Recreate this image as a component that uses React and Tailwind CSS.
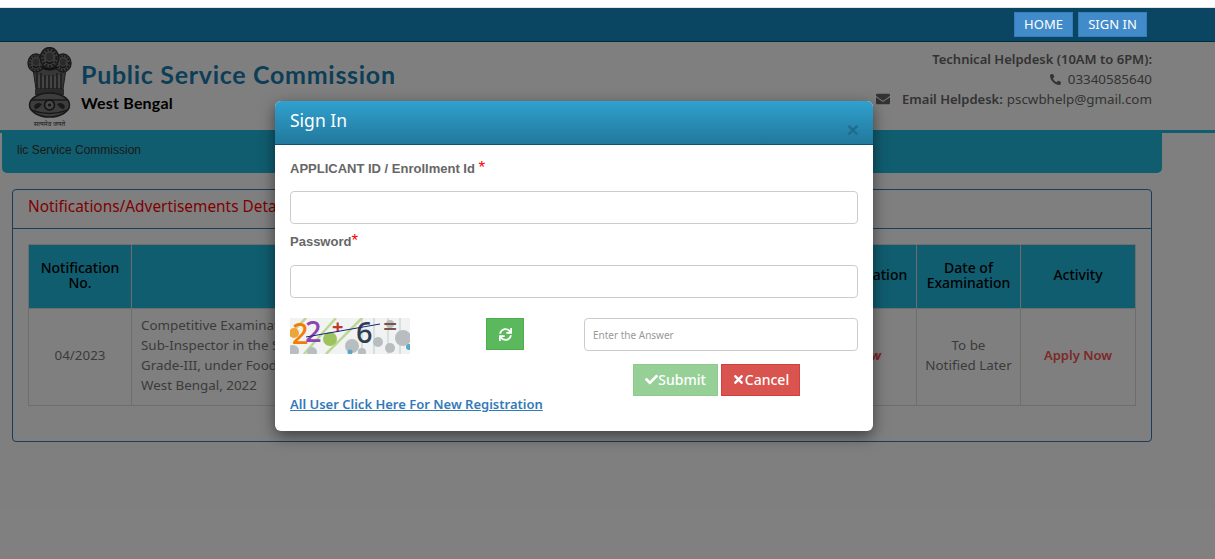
import { FaPhoneAlt, FaEnvelope, FaSync, FaCheck, FaTimes } from "react-icons/fa";

const body = "font-['Noto_Sans','Open_Sans',sans-serif]";

function Lion({ x, y, s = 1 }) {
  return (
    <g transform={`translate(${x} ${y}) scale(${s})`}>
      <ellipse cx="0" cy="0" rx="8" ry="9" fill="#777" stroke="#333" strokeWidth="1.4" />
      <ellipse cx="0" cy="0" rx="6" ry="7" fill="none" stroke="#2f2f2f" strokeWidth="2" strokeDasharray="1.5 1.5" />
      <ellipse cx="0" cy="-1" rx="3" ry="3.5" fill="#555" />
      <path d="M-3 3Q0 6 3 3" stroke="#222" strokeWidth="1.3" fill="none" />
    </g>
  );
}

function Emblem() {
  return (
    <svg width="50" height="82" viewBox="0 0 50 82" className="shrink-0">
      <path d="M8 22 L41 22 L38 42 L11 42 Z" fill="#6f6f6f" stroke="#3a3a3a" strokeWidth="1" />
      <Lion x={11} y={16} />
      <Lion x={38} y={16} />
      <Lion x={24.5} y={11} s={1.15} />
      <path d="M17 20Q24.5 25 32 20" stroke="#1f1f1f" strokeWidth="2" fill="none" />
      <g stroke="#333" strokeWidth="1.3">
        <path d="M12 26V42M16 26V42M20 28V42M24 28V42M28 28V42M32 26V42M36 26V42" />
      </g>
      <g stroke="#a5a5a5" strokeWidth="1">
        <path d="M14 28V41M18 29V41M22 29V41M26 29V41M30 29V41M34 28V41" />
      </g>
      <rect x="10" y="42" width="29" height="6" fill="#555" />
      <ellipse cx="24.5" cy="58" rx="20" ry="12" fill="#7a7a7a" stroke="#2f2f2f" strokeWidth="1.5" />
      <path d="M6 53H43" stroke="#333" strokeWidth="1.5" />
      <path d="M6 63Q24.5 70 43 63" stroke="#333" strokeWidth="1.5" fill="none" />
      <circle cx="24.5" cy="58" r="5" fill="#8a8a8a" stroke="#222" strokeWidth="1.5" />
      <circle cx="24.5" cy="58" r="1.5" fill="#222" />
      <path d="M9 59Q12 54 17 57Q14 62 10 62Z" fill="#333" />
      <path d="M40 59Q37 54 32 57Q35 62 39 62Z" fill="#333" />
      <text x="24.5" y="79" textAnchor="middle" fontSize="6.5" fill="#333" fontFamily="'Noto Sans', sans-serif">
        सत्यमेव जयते
      </text>
    </svg>
  );
}

function Captcha() {
  return (
    <svg width="120" height="36" viewBox="0 0 120 36" className="shrink-0">
      <rect width="120" height="36" fill="#f1f3f3" />
      <g stroke="#d9dede" strokeWidth="2">
        <path d="M72 0V36M84 0V36M98 0V36M110 0V36" />
      </g>
      <g stroke="#bcd893" strokeWidth="2.5">
        <path d="M14 36L46 0M36 36L72 0M2 14L16 0" />
      </g>
      <g fill="#b8bdbf">
        <circle cx="3" cy="33" r="6" />
        <circle cx="22" cy="34" r="5" />
        <circle cx="62" cy="28" r="7" />
        <circle cx="72" cy="34" r="4" />
        <circle cx="88" cy="24" r="5" />
        <circle cx="100" cy="30" r="5" />
        <circle cx="113" cy="20" r="8" />
        <circle cx="100" cy="6" r="4" />
      </g>
      <circle cx="40" cy="21" r="7" fill="#9cc35d" />
      <circle cx="4" cy="15" r="5" fill="#efa43a" />
      <circle cx="60" cy="34" r="2.5" fill="#5aa7c4" />
      <circle cx="119" cy="29" r="3" fill="#5aa7c4" />
      <g fontFamily="'Noto Sans', sans-serif">
        <text x="2" y="26" fontSize="29" fontWeight="500" fill="#f57c00">2</text>
        <text x="15" y="24" fontSize="29" fontWeight="500" fill="#8e44ad">2</text>
        <text x="42" y="16" fontSize="20" fontWeight="700" fill="#c0392b">+</text>
        <text x="66" y="25" fontSize="29" fontWeight="500" fill="#2c3e50">6</text>
        <text x="93" y="17" fontSize="25" fontWeight="500" fill="#795548">=</text>
      </g>
      <path d="M16 19L90 6" stroke="#1a237e" strokeWidth="1" />
    </svg>
  );
}

export default function App() {
  return (
    <div className={`h-screen overflow-hidden bg-white ${body} text-[13.4px]`}>
      <div className="h-2 border-b border-[#e3e3e3]"></div>

      {/* nav sits above the backdrop */}
      <div className="relative z-20 h-[34px] bg-[#0a4561] border-b border-[#03293d] flex items-start justify-end gap-[5px] pr-[68px] pt-1">
        <a className="h-[25px] w-[59px] flex items-center justify-center bg-[#428bca] border border-[#357ebd] text-white text-[13px]">HOME</a>
        <a className="h-[25px] w-[69px] flex items-center justify-center bg-[#428bca] border border-[#357ebd] text-white text-[13px]">SIGN IN</a>
      </div>

      <div className="relative h-[517px]">
        <header className="h-[91px] border-b-[3px] border-[#20bbe0] flex justify-between pl-[25px] pr-[63px] pt-[5px]">
          <div className="flex gap-[6px]">
            <Emblem />
            <div className="pt-[12px]">
              <h1 className="font-['Lato',sans-serif] font-bold text-[25px] leading-[30px] tracking-[0.7px] text-[#1b7cb0]">Public Service Commission</h1>
              <p className="font-['Lato',sans-serif] font-bold text-[16px] leading-[20px] tracking-[0.2px] mt-[4px] text-black">West Bengal</p>
            </div>
          </div>
          <div className="text-right leading-[20px] pt-[2px] text-[#666]">
            <p className="font-semibold text-[13px]">Technical Helpdesk (10AM to 6PM):</p>
            <p className="flex items-center justify-end">
              <FaPhoneAlt className="text-[11px] mr-[7px]" />03340585640
            </p>
            <p className="flex items-center justify-end">
              <FaEnvelope className="text-[14px] mr-[12px]" />
              <span className="font-semibold text-[13px] mr-1">Email Helpdesk:</span>pscwbhelp@gmail.com
            </p>
          </div>
        </header>

        <div className="ml-[2px] w-[1160px] h-10 bg-[#20bbe0] rounded-b-[5px] pl-[15px] pt-[9px] font-['Liberation_Sans',sans-serif] text-[12px] leading-[16px] text-[#333] overflow-hidden whitespace-nowrap">
          lic Service Commission
        </div>

        <section className="ml-3 mt-4 w-[1140px] h-[253px] border border-[#337ab7] rounded-[4px]">
          <div className="h-[39px] border-b border-[#337ab7] pl-[15px] pb-[5px] flex items-center text-[15.4px] text-[#ff0000]">
            Notifications/Advertisements Details
          </div>
          <div className="px-[15px] pt-[15px]">
            <table className="w-[1107px] table-fixed border-collapse border border-[#ddd] text-[#777]">
              <colgroup>
                <col className="w-[103px]" />
                <col className="w-[469px]" />
                <col className="w-[190px]" />
                <col className="w-[126px]" />
                <col className="w-[104px]" />
                <col className="w-[115px]" />
              </colgroup>
              <thead>
                <tr className="h-[64px] bg-[#20bbe0] text-black text-[14px] leading-[15px] text-center">
                  <th className="border border-[#ddd] font-medium pb-1">Notification<br />No.</th>
                  <th className="border border-[#ddd] font-medium pb-1">Name of Examination</th>
                  <th className="border border-[#ddd] font-medium pb-1">Advertisement</th>
                  <th className="border border-[#ddd] font-medium pb-1 pl-[32px]">Application</th>
                  <th className="border border-[#ddd] font-medium pb-1">Date of<br />Examination</th>
                  <th className="border border-[#ddd] font-medium pb-1">Activity</th>
                </tr>
              </thead>
              <tbody>
                <tr className="h-[97px] leading-[20px]">
                  <td className="border border-[#ddd] text-center pb-1">04/2023</td>
                  <td className="border border-[#ddd] px-[9px] pb-1 whitespace-nowrap">
                    Competitive Examination for Recruitment to the post of<br />
                    Sub-Inspector in the Subordinate Food &amp; Supplies Service,<br />
                    Grade-III, under Food &amp; Supplies Department, Government of<br />
                    West Bengal, 2022
                  </td>
                  <td className="border border-[#ddd] text-center pb-1">View</td>
                  <td className="border border-[#ddd] text-center pb-1 pr-[10px] font-bold italic text-[13px] text-[#f04a4a]">Apply Now</td>
                  <td className="border border-[#ddd] text-center pb-1">To be<br />Notified Later</td>
                  <td className="border border-[#ddd] text-center pb-1 font-semibold text-[13px] text-[#f85252]">Apply Now</td>
                </tr>
              </tbody>
            </table>
          </div>
        </section>

        <div className="absolute inset-0 bg-black/50"></div>
      </div>

      {/* sign in dialog */}
      <div className="absolute z-30 left-[275px] top-[101px] w-[598px] h-[330px] bg-white rounded-[6px] shadow-[0_5px_15px_rgba(0,0,0,0.5)] overflow-hidden">
        <div className="h-11 bg-gradient-to-b from-[#30a1cf] to-[#22789c] border-b border-[#0e5470] pl-[15px] flex items-start relative">
          <h4 className="text-white text-[17.5px] leading-[39px]">Sign In</h4>
          <span className="absolute right-[14px] top-[18px] text-[#1f6d8e] leading-none font-['Liberation_Sans',sans-serif] font-bold text-[21px]">×</span>
        </div>
        <div className="px-[15px]">
          <label className="block h-5 mt-[14px] font-['Liberation_Sans',sans-serif] font-bold text-[13px] leading-[20px] text-[#666]">
            APPLICANT ID / Enrollment Id <span className="text-[#f00] font-normal text-[17px] leading-none">*</span>
          </label>
          <input className="block mt-[12px] w-[568px] h-[33px] border border-[#ccc] rounded-[4px] outline-none" />
          <label className="block h-5 mt-[8px] font-['Liberation_Sans',sans-serif] font-bold text-[13px] leading-[20px] text-[#666]">
            Password<span className="text-[#f00] font-normal text-[17px] leading-none">*</span>
          </label>
          <input type="password" className="block mt-[13px] w-[568px] h-[33px] border border-[#ccc] rounded-[4px] outline-none" />

          <div className="flex items-start mt-5">
            <Captcha />
            <button className="ml-[76px] w-[38px] h-[32px] bg-[#5cb85c] border border-[#4cae4c] text-white flex items-center justify-center">
              <FaSync className="text-[13px]" />
            </button>
            <input
              placeholder="Enter the Answer"
              className="ml-[60px] w-[274px] h-[33px] px-2 border border-[#ccc] rounded-[4px] text-[10px] outline-none placeholder:text-[#999]"
            />
          </div>

          <div className="flex gap-[3px] mt-[10px] ml-[343px]">
            <button className="w-[85px] h-[32px] pb-[1px] bg-[#96d096] border border-[#8ccb8c] text-white text-[14px] font-medium flex items-center justify-center">
              <FaCheck className="text-[13px]" />Submit
            </button>
            <button className="w-[79px] h-[32px] pb-[1px] bg-[#d9534f] border border-[#d43f3a] text-white text-[14px] font-medium flex items-center justify-center">
              <FaTimes className="text-[13px]" />Cancel
            </button>
          </div>

          <a className="block -mt-[2px] font-semibold text-[13px] leading-[20px] text-[#337ab7] underline">
            All User Click Here For New Registration
          </a>
        </div>
      </div>
    </div>
  );
}
